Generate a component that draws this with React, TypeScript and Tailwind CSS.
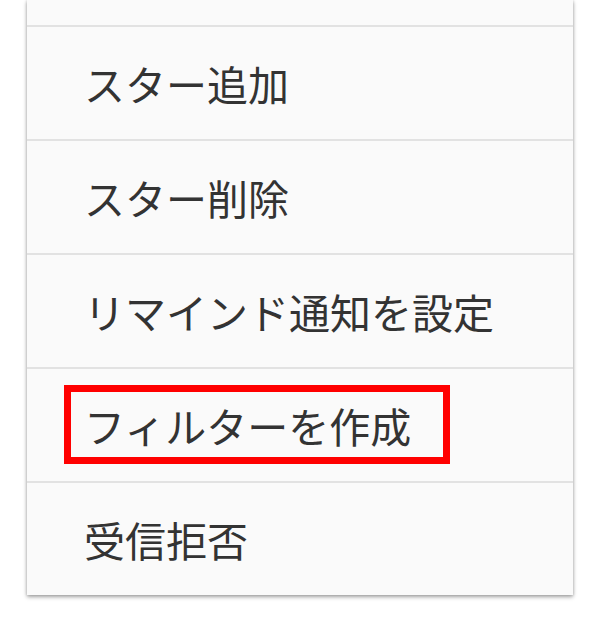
import React from "react";

const items = ["スター追加", "スター削除", "リマインド通知を設定", "フィルターを作成", "受信拒否"];

export default function App() {
  return (
    <div className="w-[600px] h-[624px] bg-white overflow-hidden" style={{ fontFamily: '"Noto Sans CJK JP", "Noto Sans", sans-serif' }}>
      <div className="ml-[27px] w-[546px] bg-[#fafafa] shadow-[0_2px_4px_rgba(0,0,0,0.35),0_0_3px_rgba(0,0,0,0.15)]">
        <div className="h-[25px]" />
        {items.map((t, i) => (
          <div key={t} className="relative h-[114px] border-t-2 border-[#e2e2e2] flex items-center pl-[57px]">
            <span className="text-[41px] leading-none text-[#333333]">{t}</span>
            {i === 3 && (
              <div className="absolute left-[37px] top-[16px] w-[386px] h-[79px] border-[7px] border-[#ff0000]" />
            )}
          </div>
        ))}
      </div>
    </div>
  );
}
